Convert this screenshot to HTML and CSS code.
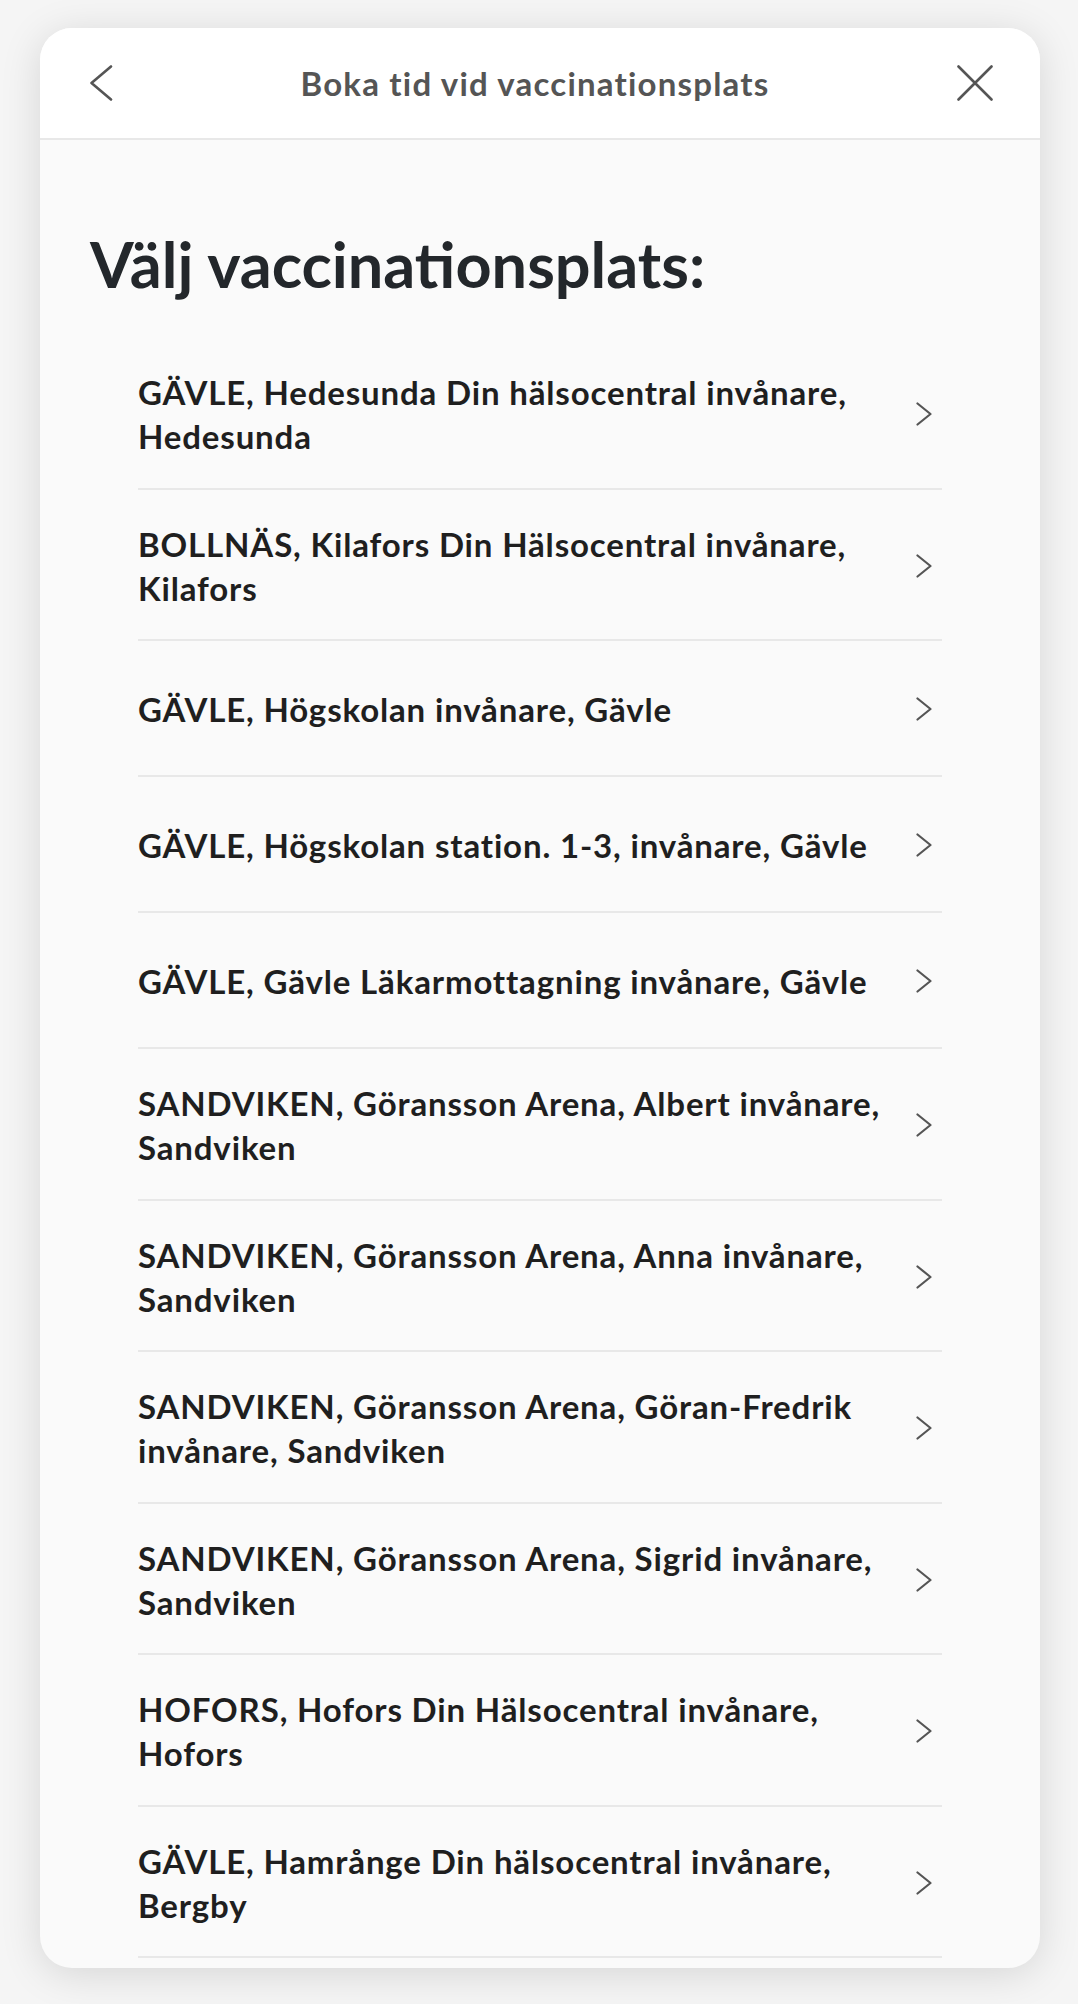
FILE: index.html
```html
<!DOCTYPE html>
<html lang="sv">
<head>
<meta charset="utf-8">
<title>Boka tid vid vaccinationsplats</title>
<link rel="stylesheet" href="styles.css">
</head>
<body>
<div class="card">
  <header class="topbar">
    <button class="icon-btn back" aria-label="Tillbaka">
      <svg width="24" height="36" viewBox="0 0 24 36"><path d="M22 1.5 L2.5 18 L22 34.5" fill="none" stroke="#555" stroke-width="2.6" stroke-linecap="round" stroke-linejoin="round"/></svg>
    </button>
    <div class="topbar-title">Boka tid vid vaccinationsplats</div>
    <button class="icon-btn close" aria-label="Stäng">
      <svg width="36" height="36" viewBox="0 0 36 36"><path d="M1.5 1.5 L34.5 34.5 M34.5 1.5 L1.5 34.5" fill="none" stroke="#555" stroke-width="2.6" stroke-linecap="round"/></svg>
    </button>
  </header>
  <main class="content">
    <h1 class="heading">Välj vaccinationsplats:</h1>
    <ul class="list">
      <li class="row"><span class="label">GÄVLE, Hedesunda Din hälsocentral invånare, Hedesunda</span><svg class="chev" width="16" height="24" viewBox="0 0 16 24"><path d="M1.5 1.5 L14.5 12 L1.5 22.5" fill="none" stroke="#555" stroke-width="2.2" stroke-linecap="round" stroke-linejoin="round"/></svg></li>
      <li class="row"><span class="label">BOLLNÄS, Kilafors Din Hälsocentral invånare, Kilafors</span><svg class="chev" width="16" height="24" viewBox="0 0 16 24"><path d="M1.5 1.5 L14.5 12 L1.5 22.5" fill="none" stroke="#555" stroke-width="2.2" stroke-linecap="round" stroke-linejoin="round"/></svg></li>
      <li class="row"><span class="label">GÄVLE, Högskolan invånare, Gävle</span><svg class="chev" width="16" height="24" viewBox="0 0 16 24"><path d="M1.5 1.5 L14.5 12 L1.5 22.5" fill="none" stroke="#555" stroke-width="2.2" stroke-linecap="round" stroke-linejoin="round"/></svg></li>
      <li class="row"><span class="label">GÄVLE, Högskolan station. 1-3, invånare, Gävle</span><svg class="chev" width="16" height="24" viewBox="0 0 16 24"><path d="M1.5 1.5 L14.5 12 L1.5 22.5" fill="none" stroke="#555" stroke-width="2.2" stroke-linecap="round" stroke-linejoin="round"/></svg></li>
      <li class="row"><span class="label">GÄVLE, Gävle Läkarmottagning invånare, Gävle</span><svg class="chev" width="16" height="24" viewBox="0 0 16 24"><path d="M1.5 1.5 L14.5 12 L1.5 22.5" fill="none" stroke="#555" stroke-width="2.2" stroke-linecap="round" stroke-linejoin="round"/></svg></li>
      <li class="row"><span class="label">SANDVIKEN, Göransson Arena, Albert invånare, Sandviken</span><svg class="chev" width="16" height="24" viewBox="0 0 16 24"><path d="M1.5 1.5 L14.5 12 L1.5 22.5" fill="none" stroke="#555" stroke-width="2.2" stroke-linecap="round" stroke-linejoin="round"/></svg></li>
      <li class="row"><span class="label">SANDVIKEN, Göransson Arena, Anna invånare, Sandviken</span><svg class="chev" width="16" height="24" viewBox="0 0 16 24"><path d="M1.5 1.5 L14.5 12 L1.5 22.5" fill="none" stroke="#555" stroke-width="2.2" stroke-linecap="round" stroke-linejoin="round"/></svg></li>
      <li class="row"><span class="label">SANDVIKEN, Göransson Arena, Göran-Fredrik invånare, Sandviken</span><svg class="chev" width="16" height="24" viewBox="0 0 16 24"><path d="M1.5 1.5 L14.5 12 L1.5 22.5" fill="none" stroke="#555" stroke-width="2.2" stroke-linecap="round" stroke-linejoin="round"/></svg></li>
      <li class="row"><span class="label">SANDVIKEN, Göransson Arena, Sigrid invånare, Sandviken</span><svg class="chev" width="16" height="24" viewBox="0 0 16 24"><path d="M1.5 1.5 L14.5 12 L1.5 22.5" fill="none" stroke="#555" stroke-width="2.2" stroke-linecap="round" stroke-linejoin="round"/></svg></li>
      <li class="row"><span class="label">HOFORS, Hofors Din Hälsocentral invånare, Hofors</span><svg class="chev" width="16" height="24" viewBox="0 0 16 24"><path d="M1.5 1.5 L14.5 12 L1.5 22.5" fill="none" stroke="#555" stroke-width="2.2" stroke-linecap="round" stroke-linejoin="round"/></svg></li>
      <li class="row"><span class="label">GÄVLE, Hamrånge Din hälsocentral invånare, Bergby</span><svg class="chev" width="16" height="24" viewBox="0 0 16 24"><path d="M1.5 1.5 L14.5 12 L1.5 22.5" fill="none" stroke="#555" stroke-width="2.2" stroke-linecap="round" stroke-linejoin="round"/></svg></li>
    </ul>
  </main>
</div>
</body>
</html>
```
FILE: styles.css
```css
html, body {
  margin: 0;
  padding: 0;
}
body {
  background: #f5f5f5;
  font-family: "Lato", "Liberation Sans", sans-serif;
  height: 2004px;
  overflow: hidden;
  padding-top: 28px;
  box-sizing: border-box;
}
.card {
  margin: 0 38px 0 40px;
  width: 1000px;
  height: 1940px;
  border-radius: 32px;
  overflow: hidden;
  background: #fafafa;
  box-shadow: 0 6px 40px rgba(0, 0, 0, 0.13);
  display: flex;
  flex-direction: column;
}
.topbar {
  height: 110px;
  flex: none;
  background: #ffffff;
  border-bottom: 2px solid #e8e8e8;
  display: flex;
  align-items: center;
  justify-content: space-between;
  padding: 0 47px 0 49px;
}
.icon-btn {
  background: none;
  border: 0;
  padding: 0;
  margin: 0;
  display: flex;
  align-items: center;
  justify-content: center;
  cursor: pointer;
  height: 40px;
}
.topbar-title {
  font-weight: 700;
  font-size: 33px;
  letter-spacing: 1.2px;
  color: #555555;
  line-height: 40px;
  text-align: center;
}
.content {
  padding: 85px 50px 0 50px;
}
.heading {
  margin: 0;
  font-size: 63px;
  line-height: 77px;
  font-weight: 700;
  color: #23272b;
}
.list {
  list-style: none;
  margin: 36px 48px 0 48px;
  padding: 0;
}
.row {
  display: flex;
  align-items: center;
  justify-content: space-between;
  min-height: 136px;
  box-sizing: border-box;
  padding: 32px 0 29.5px;
  border-bottom: 2px solid #e8e8e8;
}
.label {
  flex: 1;
  max-width: 770px;
  font-size: 33px;
  letter-spacing: 0.85px;
  line-height: 44px;
  font-weight: 700;
  color: #1f1f1f;
}
.chev {
  flex: none;
  margin-right: 10px;
}
```
